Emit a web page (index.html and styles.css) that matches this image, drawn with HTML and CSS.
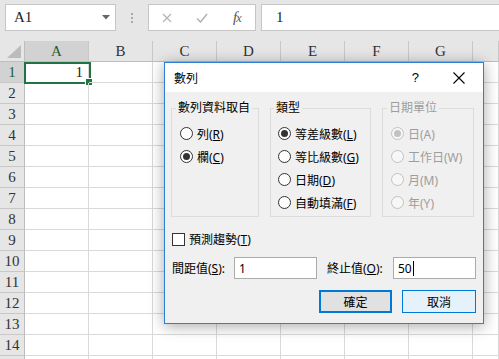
FILE: index.html
```html
<!DOCTYPE html>
<html lang="zh-Hant">
<head>
  <meta charset="UTF-8">
  <meta name="viewport" content="width=device-width, initial-scale=1.0">
  <title>數列</title>
  <link rel="stylesheet" href="styles.css">
</head>
<body>
  <div class="app">
    <!-- Formula Bar -->
    <div class="formula-bar">
      <div class="name-box">
        <span>A1</span>
        <svg class="dropdown" width="8" height="5" viewBox="0 0 8 5"><path d="M0 0h8L4 4.5z" fill="#666"/></svg>
      </div>
      <div class="grip"><i></i><i></i><i></i></div>
      <div class="fx-box">
        <svg class="fx-icon" width="10" height="10" viewBox="0 0 10 10"><path d="M1 1l8 8M9 1L1 9" stroke="#b4b4b4" stroke-width="1.3" fill="none"/></svg>
        <svg class="fx-icon" width="12" height="10" viewBox="0 0 12 10"><path d="M1 5.5l3.5 3.5L11 1" stroke="#b4b4b4" stroke-width="1.6" fill="none"/></svg>
        <span class="fx">f<span class="fx-x">x</span></span>
      </div>
      <div class="formula-input">1</div>
    </div>

    <!-- Sheet -->
    <div class="sheet" id="sheet">
      <div class="corner"><svg width="14" height="13" viewBox="0 0 14 13"><path d="M14 0v13H0z" fill="#bcbcbc"/></svg></div>
    </div>

    <!-- Series Dialog -->
    <div class="dialog">
      <div class="dialog-title">
        <span class="title-text">數列</span>
        <span class="help">?</span>
        <svg class="close" width="12" height="12" viewBox="0 0 12 12"><path d="M0.5 0.5l11 11M11.5 0.5l-11 11" stroke="#000" stroke-width="1.1" fill="none"/></svg>
      </div>
      <div class="dialog-body">
        <div class="groups">
          <fieldset class="group group-source">
            <legend>數列資料取自</legend>
            <label class="option"><span class="radio"></span><span>列(<u>R</u>)</span></label>
            <label class="option"><span class="radio checked"></span><span>欄(<u>C</u>)</span></label>
          </fieldset>
          <fieldset class="group group-type">
            <legend>類型</legend>
            <label class="option"><span class="radio checked"></span><span>等差級數(<u>L</u>)</span></label>
            <label class="option"><span class="radio"></span><span>等比級數(<u>G</u>)</span></label>
            <label class="option"><span class="radio"></span><span>日期(<u>D</u>)</span></label>
            <label class="option"><span class="radio"></span><span>自動填滿(<u>F</u>)</span></label>
          </fieldset>
          <fieldset class="group group-unit disabled">
            <legend>日期單位</legend>
            <label class="option"><span class="radio checked"></span><span>日(A)</span></label>
            <label class="option"><span class="radio"></span><span>工作日(W)</span></label>
            <label class="option"><span class="radio"></span><span>月(M)</span></label>
            <label class="option"><span class="radio"></span><span>年(Y)</span></label>
          </fieldset>
        </div>

        <label class="check-row"><span class="checkbox"></span><span>預測趨勢(<u>T</u>)</span></label>

        <div class="value-row">
          <span class="value-label step-label">間距值(<u>S</u>):</span>
          <div class="text-input">1</div>
          <span class="value-label stop-label">終止值(<u>O</u>):</span>
          <div class="text-input">50<span class="caret"></span></div>
        </div>

        <div class="button-row">
          <button class="btn btn-default">確定</button>
          <button class="btn btn-hover">取消</button>
        </div>
      </div>
    </div>
  </div>

  <script>
    // Build the spreadsheet grid
    const sheet = document.getElementById("sheet");
    const columns = ["A", "B", "C", "D", "E", "F", "G", ""];

    columns.forEach((letter, i) => {
      const head = document.createElement("div");
      head.className = "col-head" + (i === 0 ? " active" : "");
      head.textContent = letter;
      sheet.appendChild(head);
    });

    // Row 15 only peeks in at the bottom edge, so it gets no label
    for (let row = 1; row <= 15; row++) {
      const rowHead = document.createElement("div");
      rowHead.className = "row-head" + (row === 1 ? " active" : "");
      rowHead.textContent = row < 15 ? row : "";
      sheet.appendChild(rowHead);

      columns.forEach((letter, i) => {
        const cell = document.createElement("div");
        cell.className = "cell";
        if (row === 1 && i === 0) {
          cell.classList.add("selected");
          cell.textContent = "1";
        }
        sheet.appendChild(cell);
      });
    }
  </script>
</body>
</html>
```

FILE: styles.css
```css
/* General Styles */
* {
  box-sizing: border-box;
}

body {
  margin: 0;
  padding: 0;
  width: 499px;
  height: 359px;
  overflow: hidden;
  background-color: #fff;
  font-family: "Liberation Serif", serif;
}

.app {
  position: relative;
  width: 499px;
  height: 359px;
}

/* Formula Bar */
.formula-bar {
  display: flex;
  align-items: flex-start;
  height: 41px;
  padding-top: 4px;
  background-color: #e6e6e6;
}

.name-box {
  display: flex;
  align-items: center;
  justify-content: space-between;
  width: 111px;
  height: 27px;
  margin-left: 5px;
  padding: 0 5px 0 8px;
  background-color: #fff;
  border: 1px solid #c6c6c6;
  font-size: 15px;
  color: #222;
}

.grip {
  display: flex;
  flex-direction: column;
  gap: 2px;
  width: 32px;
  height: 27px;
  align-items: center;
  justify-content: center;
}

.grip i {
  width: 2px;
  height: 2px;
  background-color: #a8a8a8;
}

.fx-box {
  display: flex;
  align-items: center;
  width: 108px;
  height: 27px;
  padding-left: 13px;
  background-color: #fff;
  border: 1px solid #c6c6c6;
}

.fx-icon:first-child {
  margin-right: 24px;
}

.fx {
  margin-left: 25px;
  font-style: italic;
  font-size: 15px;
  color: #555;
  letter-spacing: -1px;
}

.fx-x {
  font-size: 12px;
}

.formula-input {
  flex: 1;
  height: 27px;
  margin-left: 5px;
  padding-left: 14px;
  line-height: 25px;
  background-color: #fff;
  border: 1px solid #c6c6c6;
  border-right: none;
  font-size: 15px;
  color: #222;
}

/* Sheet */
.sheet {
  display: grid;
  grid-template-columns: 25px repeat(7, 64px) 1fr;
  grid-auto-rows: 21px;
  height: 318px;
  overflow: hidden;
}

.corner {
  display: flex;
  align-items: flex-end;
  justify-content: flex-end;
  padding: 0 3px 3px 0;
  background-color: #e6e6e6;
  border-right: 1px solid #bdbdbd;
  border-bottom: 1px solid #bdbdbd;
}

.col-head,
.row-head {
  display: flex;
  align-items: center;
  justify-content: center;
  background-color: #e6e6e6;
  font-size: 15px;
  color: #333;
  border-right: 1px solid #c8c8c8;
  border-bottom: 1px solid #bdbdbd;
}

.row-head {
  border-bottom-color: #c8c8c8;
  border-right-color: #bdbdbd;
}

.col-head.active,
.row-head.active {
  background-color: #d2d2d2;
  color: #1e5e38;
}

.cell {
  position: relative;
  border-right: 1px solid #d9d9d9;
  border-bottom: 1px solid #d9d9d9;
  font-size: 15px;
  text-align: right;
  padding-right: 5px;
  line-height: 20px;
  color: #222;
}

.cell.selected::before {
  content: "";
  position: absolute;
  top: 0;
  left: -1px;
  right: -3px;
  bottom: -2px;
  border: 2px solid #217346;
}

.cell.selected::after {
  content: "";
  position: absolute;
  right: -5px;
  bottom: -4px;
  width: 6px;
  height: 6px;
  background-color: #217346;
  border: 1px solid #fff;
}

/* Dialog */
.dialog {
  position: absolute;
  left: 164px;
  top: 62px;
  width: 320px;
  height: 262px;
  background-color: #f0f0f0;
  border: 1px solid #2b7fd4;
  box-shadow: 0 2px 14px rgba(0, 0, 0, 0.35);
  font-family: "Noto Sans", "Noto Sans CJK TC", sans-serif;
  font-size: 12px;
  color: #000;
}

.dialog-title {
  display: flex;
  align-items: center;
  height: 29px;
  padding-left: 9px;
  background-color: #fff;
}

.title-text {
  flex: 1;
}

.help {
  font-family: "Liberation Sans", sans-serif;
  font-size: 13px;
  margin-right: 34px;
}

.close {
  margin-right: 18px;
}

.dialog-body {
  padding: 10px 7px 0 6px;
}

.groups {
  display: flex;
  gap: 11px;
}

.group {
  margin: 0;
  padding: 8px 0 2px 8px;
  border: 1px solid #dcdcdc;
  min-width: 0;
}

.group legend {
  padding: 0 2px;
  margin-left: -4px;
  line-height: 12px;
  white-space: nowrap;
  color: #000;
}

.group-source {
  width: 88px;
}

.group-type {
  width: 101px;
  padding-left: 7px;
}

.group-unit {
  width: 92px;
}

.option {
  display: flex;
  align-items: center;
  gap: 4px;
  height: 23px;
  white-space: nowrap;
}

.radio {
  position: relative;
  width: 13px;
  height: 13px;
  border: 1px solid #333;
  border-radius: 50%;
  background-color: #fff;
  flex-shrink: 0;
}

.radio.checked::after {
  content: "";
  position: absolute;
  left: 2px;
  top: 2px;
  width: 7px;
  height: 7px;
  border-radius: 50%;
  background-color: #333;
}

.disabled legend,
.disabled .option {
  color: #9d9d9d;
}

.disabled .radio {
  border-color: #c2c2c2;
  background-color: #f7f7f7;
}

.disabled .radio.checked::after {
  background-color: #c2c2c2;
}

.check-row {
  display: flex;
  align-items: center;
  gap: 4px;
  height: 20px;
  margin-top: 12px;
  padding-left: 1px;
}

.checkbox {
  width: 13px;
  height: 13px;
  border: 1px solid #333;
  background-color: #fff;
}

.value-row {
  display: flex;
  align-items: center;
  height: 22px;
  margin-top: 8px;
}

.step-label {
  width: 63px;
  padding-left: 1px;
}

.stop-label {
  width: 66px;
  margin-left: 10px;
}

.text-input {
  display: flex;
  align-items: center;
  width: 83px;
  height: 22px;
  padding-left: 4px;
  background-color: #fff;
  border: 1px solid #ababab;
  font-family: "Noto Sans", sans-serif;
  font-size: 12px;
}

.caret {
  width: 1px;
  height: 15px;
  margin-left: 1px;
  background-color: #000;
}

.button-row {
  display: flex;
  justify-content: flex-end;
  gap: 10px;
  margin-top: 11px;
}

.btn {
  width: 74px;
  height: 23px;
  padding: 0;
  font-family: "Noto Sans CJK TC", sans-serif;
  font-size: 12px;
  color: #000;
  cursor: pointer;
}

.btn-default {
  width: 73px;
  background-color: #e1e1e1;
  border: 2px solid #0078d7;
}

.btn-hover {
  background-color: #e5f1fb;
  border: 1px solid #0078d7;
}
```
